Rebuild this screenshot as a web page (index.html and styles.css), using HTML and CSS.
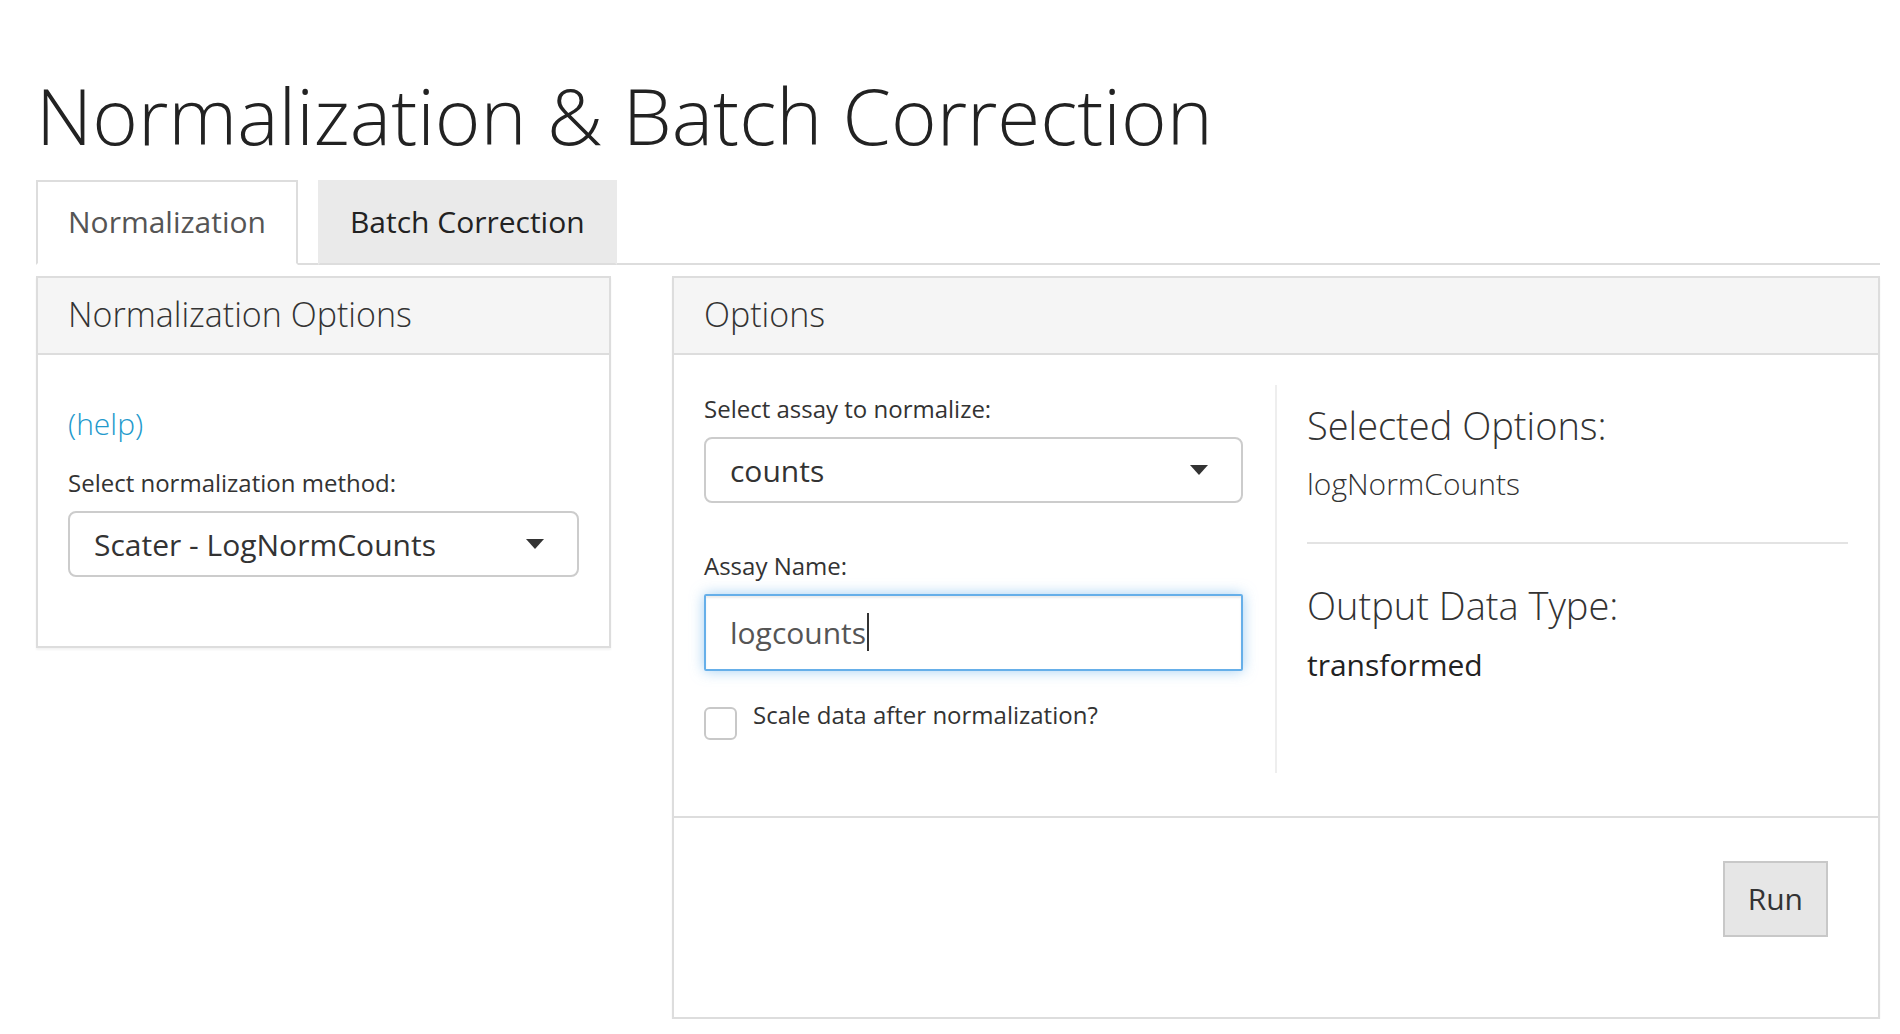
FILE: index.html
```html
<!DOCTYPE html>
<html lang="en">
<head>
<meta charset="utf-8">
<title>Normalization &amp; Batch Correction</title>
<link rel="stylesheet" href="styles.css">
</head>
<body>
<div class="page">
  <h1 class="title">Normalization &amp; Batch Correction</h1>
  <ul class="tabs">
    <li class="tab active">Normalization</li>
    <li class="tab">Batch Correction</li>
  </ul>
  <div class="tab-content">
    <section class="panel">
      <div class="panel-heading">Normalization Options</div>
      <div class="side-body">
        <a class="help" href="#">(help)</a>
        <label class="field-label side-label">Select normalization method:</label>
        <div class="select"><span>Scater - LogNormCounts</span><span class="arrow"></span></div>
      </div>
    </section>
    <section class="panel">
      <div class="panel-heading">Options</div>
      <div class="main-body">
        <div class="options-row">
          <div class="form-col">
            <label class="field-label">Select assay to normalize:</label>
            <div class="select"><span>counts</span><span class="arrow"></span></div>
            <label class="field-label assay-label">Assay Name:</label>
            <div class="text-input"><span class="input-value">logcounts</span><span class="cursor"></span></div>
            <div class="check-row">
              <span class="checkbox"></span>
              <span class="check-label">Scale data after normalization?</span>
            </div>
          </div>
          <div class="summary-col">
            <h4 class="summary-title first">Selected Options:</h4>
            <p class="summary-value light">logNormCounts</p>
            <hr class="divider">
            <h4 class="summary-title">Output Data Type:</h4>
            <p class="summary-value">transformed</p>
          </div>
        </div>
      </div>
      <div class="panel-footer">
        <button class="btn" type="button">Run</button>
      </div>
    </section>
  </div>
</div>
</body>
</html>
```

FILE: styles.css
```css
html, body {
  margin: 0;
  background: #fff;
}

body {
  font-family: "Open Sans", "Liberation Sans", sans-serif;
  color: #333;
}

.page {
  padding: 72px 20px 0 36px;
}

.title {
  margin: 0;
  font-size: 78px;
  font-weight: 300;
  line-height: 86px;
  color: #222;
}

.tabs {
  display: flex;
  gap: 20px;
  list-style: none;
  margin: 22px 0 0;
  padding: 0;
  border-bottom: 2px solid #ddd;
}

.tab {
  font-size: 30px;
  line-height: 43px;
  padding: 18px 30px 20px;
  margin-bottom: -2px;
  border: 2px solid #eaeaea;
  border-bottom-color: #ddd;
  background: #eaeaea;
  color: #222;
}

.tab.active {
  background: #fff;
  border-color: #ddd;
  border-bottom-color: #fff;
  color: #555;
}

.tab-content {
  display: grid;
  grid-template-columns: 575px 1fr;
  column-gap: 61px;
  align-items: start;
  margin-top: 11px;
}

.panel {
  border: 2px solid #ddd;
  background: #fff;
  box-shadow: 0 2px 2px rgba(0, 0, 0, 0.05);
}

.panel-heading {
  background: #f5f5f5;
  border-bottom: 2px solid #ddd;
  padding: 19px 30px 21px;
  font-size: 34px;
  font-weight: 300;
  line-height: 35px;
  color: #333;
}

.side-body {
  padding: 47px 30px 69px;
}

.help {
  display: block;
  font-size: 30px;
  font-weight: 300;
  line-height: 43px;
  color: #2299cc;
  text-decoration: none;
}

.field-label {
  display: block;
  font-size: 24px;
  line-height: 34px;
  font-weight: 400;
  color: #333;
  margin: 0 0 11px;
}

.side-label {
  margin-top: 21px;
}

.assay-label {
  margin-top: 46px;
}

.select {
  display: flex;
  align-items: center;
  justify-content: space-between;
  border: 2px solid #ccc;
  border-radius: 8px;
  padding: 10px 33px 9px 24px;
  font-size: 30px;
  line-height: 43px;
  color: #333;
  background: #fff;
}

.arrow {
  width: 0;
  height: 0;
  border-left: 9.5px solid transparent;
  border-right: 9.5px solid transparent;
  border-top: 10px solid #333;
  margin-top: -2px;
}

.main-body {
  padding: 30px 30px 43px;
}

.options-row {
  display: flex;
  height: 388px;
}

.form-col {
  flex: none;
  width: 539px;
  padding: 7px 32px 0 0;
}

.text-input {
  border: 2px solid #66afe9;
  border-radius: 2px;
  padding: 15px 24px;
  font-size: 30px;
  line-height: 43px;
  color: #555;
  box-shadow: inset 0 2px 2px rgba(0, 0, 0, 0.075), 0 0 14px rgba(102, 175, 233, 0.6);
}

.cursor {
  display: inline-block;
  width: 2px;
  height: 38px;
  margin-top: 2px;
  margin-left: 1px;
  background: #333;
  vertical-align: top;
}

.check-row {
  display: flex;
  align-items: flex-start;
  gap: 16px;
  margin-top: 27px;
}

.checkbox {
  flex: none;
  width: 29px;
  height: 29px;
  margin-top: 9px;
  border: 2px solid #c8c8c8;
  border-radius: 6px;
  background: #fff;
}

.check-label {
  font-size: 24px;
  line-height: 34px;
  color: #333;
}

.summary-col {
  flex: 1;
  border-left: 2px solid #eee;
  padding-left: 30px;
}

.summary-title {
  margin: 40px 0 0;
  font-size: 38px;
  font-weight: 300;
  line-height: 42px;
  color: #333;
}

.summary-title.first {
  margin-top: 19px;
}

.summary-value {
  margin: 17px 0 0;
  font-size: 30px;
  line-height: 43px;
  color: #222;
}

.summary-value.light {
  margin-top: 16px;
  font-weight: 300;
  color: #333;
}

.divider {
  margin: 37px 0 0;
  border: 0;
  border-top: 2px solid #e3e3e3;
}

.panel-footer {
  display: flex;
  justify-content: flex-end;
  border-top: 2px solid #ddd;
  padding: 43px 50px 80px 0;
}

.btn {
  font-family: inherit;
  font-size: 30px;
  line-height: 43px;
  padding: 14px 23px 15px;
  border: 2px solid #c8c8c8;
  border-radius: 0;
  background: #e6e6e6;
  color: #333;
}
```
